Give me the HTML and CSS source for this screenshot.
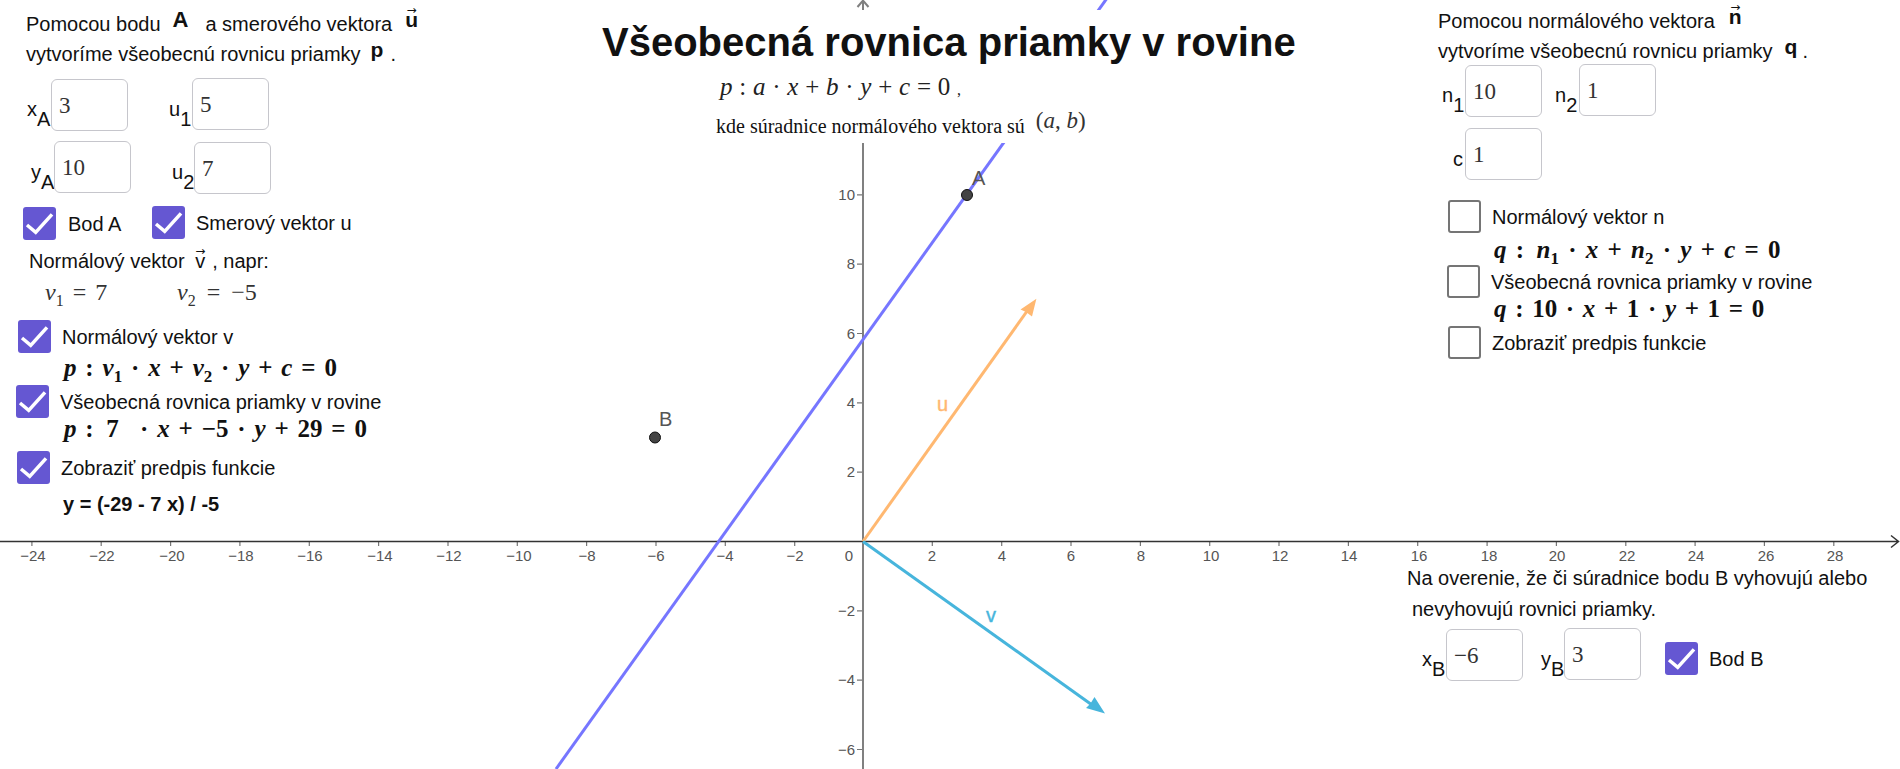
FILE: index.html
```html
<!DOCTYPE html>
<html lang="sk">
<head>
  <meta charset="UTF-8" />
  <meta name="viewport" content="width=device-width, initial-scale=1.0"/>
  <title>Všeobecná rovnica priamky v rovine</title>
  <link rel="stylesheet" href="styles.css">
</head>
<body>
<div class="stage">

  <!-- graphics view, origin at 863,541.5 and 34.67px per unit -->
  <svg class="plot" width="1900" height="769" viewBox="0 0 1900 769">
    <path class="grid-tick" d="M31.9 541v5M101.2 541v5M170.6 541v5M239.9 541v5M309.3 541v5M378.6 541v5M448 541v5M517.3 541v5M586.6 541v5M656 541v5M725.3 541v5M794.7 541v5M932.3 541v5M1001.7 541v5M1071 541v5M1140.4 541v5M1209.7 541v5M1279 541v5M1348.4 541v5M1417.7 541v5M1487.1 541v5M1556.4 541v5M1625.8 541v5M1695.1 541v5M1764.4 541v5M1833.8 541v5"/>
    <path class="grid-tick" d="M857 194.8h6M857 264.1h6M857 333.5h6M857 402.8h6M857 472.2h6M857 610.8h6M857 680.2h6M857 749.5h6"/>
    <path class="axis-y" d="M863 769V0M857.5 7L863 .5 868.5 7"/>
    <path class="axis-x" d="M0 541.5H1899M1891 535.5l7.5 6-7.5 6"/>

    <line class="line-p" x1="556" y1="769" x2="1110" y2="-6"/>
    <line class="vec-u" x1="863" y1="541.5" x2="1030" y2="307"/>
    <path class="head-u" d="M1036.4 298.8L1020.5 309.5 1026 312 1032 316.5z"/>
    <line class="vec-v" x1="863" y1="541.5" x2="1097" y2="708.5"/>
    <path class="head-v" d="M1105 713.5L1086 708 1090.5 703.5 1094.5 697z"/>

    <text class="lbl-u" x="937" y="411">u</text>
    <text class="lbl-v" x="986" y="622">v</text>

    <circle class="pt" cx="967" cy="195" r="5.5"/>
    <circle class="pt" cx="655" cy="437.5" r="5.5"/>
    <text class="lbl-pt" x="972" y="185">A</text>
    <text class="lbl-pt" x="659" y="426">B</text>

    <g class="ticks-x">
      <text x="33" y="561">−24</text><text x="102" y="561">−22</text><text x="172" y="561">−20</text>
      <text x="241" y="561">−18</text><text x="310" y="561">−16</text><text x="380" y="561">−14</text>
      <text x="449" y="561">−12</text><text x="519" y="561">−10</text><text x="587" y="561">−8</text>
      <text x="656" y="561">−6</text><text x="725" y="561">−4</text><text x="795" y="561">−2</text>
      <text x="849" y="561">0</text>
      <text x="932" y="561">2</text><text x="1002" y="561">4</text><text x="1071" y="561">6</text>
      <text x="1141" y="561">8</text><text x="1211" y="561">10</text><text x="1280" y="561">12</text>
      <text x="1349" y="561">14</text><text x="1419" y="561">16</text><text x="1489" y="561">18</text>
      <text x="1557" y="561">20</text><text x="1627" y="561">22</text><text x="1696" y="561">24</text>
      <text x="1766" y="561">26</text><text x="1835" y="561">28</text>
    </g>
    <g class="ticks-y">
      <text x="855" y="199.5">10</text><text x="855" y="269">8</text><text x="855" y="338.5">6</text>
      <text x="855" y="408">4</text><text x="855" y="477">2</text><text x="855" y="615.5">−2</text>
      <text x="855" y="685">−4</text><text x="855" y="754.5">−6</text>
    </g>
  </svg>

  <!-- left column -->
  <section class="panel panel-left">
    <p class="note">Pomocou bodu<b class="sym sym-a">A</b>a smerového vektora<b class="sym vec sym-u">u</b></p>
    <p class="note">vytvoríme všeobecnú rovnicu priamky<b class="sym sym-p">p</b>.</p>

    <div class="row row-xa">
      <div class="lab lab-xa">x<sub>A</sub></div>
      <div class="box box-low">3</div>
      <div class="lab lab-u1">u<sub>1</sub></div>
      <div class="box">5</div>
    </div>
    <div class="row row-ya">
      <div class="lab lab-ya">y<sub>A</sub></div>
      <div class="box">10</div>
      <div class="lab lab-u2">u<sub>2</sub></div>
      <div class="box box-low">7</div>
    </div>

    <div class="checks-a">
      <label class="cb cb-a"><span class="tick on"><svg viewBox="0 0 33 33"><path d="M4 18l8.7 7.3L29 7.3"/></svg></span><span class="txt">Bod A</span></label>
      <label class="cb cb-u"><span class="tick on"><svg viewBox="0 0 33 33"><path d="M4 18l8.7 7.3L29 7.3"/></svg></span><span class="txt">Smerový vektor u</span></label>
    </div>

    <p class="note note-v">Normálový vektor <i class="sym-thin vec">v</i>, napr:</p>
    <div class="values"><span class="val-1"><i>v</i><sub>1</sub> = 7</span><span class="val-2"><i>v</i><sub>2</sub> = −5</span></div>

    <label class="cb cb-nv"><span class="tick on"><svg viewBox="0 0 33 33"><path d="M4 18l8.7 7.3L29 7.3"/></svg></span><span class="txt">Normálový vektor v</span></label>
    <div class="eq eq-1"><i>p</i> : <i>v</i><sub>1</sub> · <i>x</i> + <i>v</i><sub>2</sub> · <i>y</i> + <i>c</i> = 0</div>
    <label class="cb cb-gen"><span class="tick on"><svg viewBox="0 0 33 33"><path d="M4 18l8.7 7.3L29 7.3"/></svg></span><span class="txt">Všeobecná rovnica priamky v rovine</span></label>
    <div class="eq eq-2"><i>p</i> :&ensp;7&ensp;&nbsp;· <i>x</i> + −5 · <i>y</i> + 29 = 0</div>
    <label class="cb cb-fn"><span class="tick on"><svg viewBox="0 0 33 33"><path d="M4 18l8.7 7.3L29 7.3"/></svg></span><span class="txt">Zobraziť predpis funkcie</span></label>
    <div class="fn">y = (-29 - 7 x) / -5</div>
  </section>

  <!-- heading over the plot -->
  <header class="head">
    <h1>Všeobecná rovnica priamky v rovine</h1>
    <div class="formula"><i>p</i> : <i>a</i> · <i>x</i> + <i>b</i> · <i>y</i> + <i>c</i> = 0 <span class="comma">,</span></div>
    <div class="where">kde súradnice normálového vektora sú <span class="pair">(<i>a</i>, <i>b</i>)</span></div>
  </header>

  <!-- right column -->
  <section class="panel panel-right">
    <p class="note">Pomocou normálového vektora<b class="sym vec sym-n">n</b></p>
    <p class="note">vytvoríme všeobecnú rovnicu priamky<b class="sym sym-q">q</b>.</p>

    <div class="row row-n">
      <div class="lab lab-n1">n<sub>1</sub></div>
      <div class="box box-low">10</div>
      <div class="lab lab-n2">n<sub>2</sub></div>
      <div class="box">1</div>
    </div>
    <div class="row row-c">
      <div class="lab lab-c">c</div>
      <div class="box">1</div>
    </div>

    <label class="cb cb-r1"><span class="tick"></span><span class="txt">Normálový vektor n</span></label>
    <div class="eq eq-3"><i>q</i> :&ensp;<i>n</i><sub>1</sub> · <i>x</i> + <i>n</i><sub>2</sub> · <i>y</i> + <i>c</i> = 0</div>
    <label class="cb cb-r2"><span class="tick"></span><span class="txt">Všeobecná rovnica priamky v rovine</span></label>
    <div class="eq eq-4"><i>q</i> : 10 · <i>x</i> + 1 · <i>y</i> + 1 = 0</div>
    <label class="cb cb-r3"><span class="tick"></span><span class="txt">Zobraziť predpis funkcie</span></label>
  </section>

  <!-- point B check, bottom right -->
  <section class="panel panel-check">
    <p class="note">Na overenie, že či súradnice bodu B vyhovujú alebo</p>
    <p class="note note-in">nevyhovujú rovnici priamky.</p>
    <div class="row row-b">
      <div class="lab lab-xb">x<sub>B</sub></div>
      <div class="box box-low">−6</div>
      <div class="lab lab-yb">y<sub>B</sub></div>
      <div class="box">3</div>
      <label class="cb cb-b"><span class="tick on"><svg viewBox="0 0 33 33"><path d="M4 18l8.7 7.3L29 7.3"/></svg></span><span class="txt">Bod B</span></label>
    </div>
  </section>

</div>
</body>
</html>
```

FILE: styles.css
```css
body {
  margin: 0;
  background-color: white;
  font-family: "Liberation Sans", Arial, sans-serif;
  font-size: 20px;
  color: #111;
  overflow: hidden;
}

.stage {
  position: relative;
  width: 1900px;
  height: 769px;
  overflow: hidden;
}

/* plot */
.plot {
  position: absolute;
  left: 0;
  top: 0;
}

.axis-x {
  fill: none;
  stroke: #333;
  stroke-width: 1.5;
}

.axis-y {
  fill: none;
  stroke: #808080;
  stroke-width: 2;
}

.grid-tick {
  fill: none;
  stroke: #777;
  stroke-width: 1.2;
}

.line-p {
  stroke: #7676ff;
  stroke-width: 3;
}

.vec-u {
  stroke: #ffb871;
  stroke-width: 3;
}

.head-u {
  fill: #ffb871;
}

.vec-v {
  stroke: #47b5dc;
  stroke-width: 3;
}

.head-v {
  fill: #47b5dc;
}

.pt {
  fill: #444;
  stroke: #111;
  stroke-width: 1;
}

.lbl-pt {
  font-size: 20px;
  fill: #555;
}

.lbl-u {
  font-size: 20px;
  fill: #ffb871;
  stroke: #ffb871;
  stroke-width: 0.4;
}

.lbl-v {
  font-size: 20px;
  fill: #47b5dc;
  stroke: #47b5dc;
  stroke-width: 0.4;
}

.ticks-x text,
.ticks-y text {
  font-size: 15px;
  fill: #555;
}

.ticks-x text {
  text-anchor: middle;
}

.ticks-y text {
  text-anchor: end;
}

/* widgets */
.panel {
  position: absolute;
}

.panel-left {
  left: 0;
  top: 9px;
  width: 500px;
}

.panel-right {
  left: 1420px;
  top: 6px;
  width: 480px;
}

.panel-check {
  left: 1380px;
  top: 563px;
  width: 520px;
}

.note {
  margin: 0;
  line-height: 30px;
  white-space: nowrap;
}

.panel-left .note {
  padding-left: 26px;
}

.panel-right .note {
  padding-left: 18px;
}

.panel-check .note {
  padding-left: 27px;
  line-height: 30.5px;
}

.panel-check .note-in {
  padding-left: 32px;
}

.sym {
  position: relative;
  top: -4px;
  font-weight: bold;
  font-size: 21px;
}

.sym-a {
  font-size: 22px;
  margin: 0 17px 0 12px;
}

.sym-u {
  margin-left: 13px;
}

.sym-p {
  margin: 0 7px 0 10px;
}

.sym-n {
  margin-left: 14px;
}

.sym-q {
  margin: 0 5px 0 12px;
}

.vec {
  position: relative;
  display: inline-block;
}

.vec::before {
  content: "→";
  position: absolute;
  left: 0;
  top: -10px;
  width: 100%;
  text-align: center;
  font-size: 12px;
  font-weight: normal;
  font-family: "DejaVu Sans", sans-serif;
}

.sym-thin {
  font-style: normal;
  margin: 0 7px 0 5px;
}

.row {
  display: flex;
  align-items: flex-start;
}

.box {
  box-sizing: border-box;
  width: 77px;
  height: 52px;
  flex: none;
  display: flex;
  align-items: center;
  padding-left: 7px;
  padding-top: 1px;
  background-color: white;
  border: 1.5px solid #c6c6cc;
  border-radius: 6px;
  font-family: "Liberation Serif", serif;
  font-size: 23px;
  color: #333;
}

.box-low {
  margin-top: 1px;
}

.lab {
  flex: none;
  font-size: 20px;
  line-height: 24px;
  margin-top: 19px;
}

.lab sub {
  font-size: 20px;
  line-height: 0;
  vertical-align: -10px;
}

.row-xa {
  margin-top: 9px;
  padding-left: 27px;
}

.lab-xa {
  width: 24px;
}

.lab-u1 {
  width: 23px;
  margin-left: 41px;
}

.row-ya {
  margin-top: 10px;
  padding-left: 31px;
}

.lab-ya {
  width: 23px;
}

.lab-u2 {
  width: 22px;
  margin-left: 41px;
}

.cb {
  display: flex;
  align-items: center;
  gap: 11px;
  height: 33px;
  white-space: nowrap;
}

.txt {
  padding-top: 2px;
}

.tick {
  box-sizing: border-box;
  display: block;
  width: 33px;
  height: 33px;
  flex: none;
  border: 2.5px solid #757575;
  border-radius: 3px;
  background-color: white;
}

.tick.on {
  border: none;
  background-color: #6557d2;
}

.tick svg {
  display: block;
  width: 33px;
  height: 33px;
}

.tick path {
  fill: none;
  stroke: white;
  stroke-width: 3.5;
}

.checks-a {
  display: flex;
  margin-top: 12px;
  padding-left: 23px;
}

.cb-a {
  width: 129px;
  margin-top: 1px;
  gap: 12px;
}

.note-v {
  margin-top: 6px;
}

.panel-left .note-v {
  padding-left: 29px;
}

.values {
  display: flex;
  margin-top: 1px;
  padding-left: 45px;
  line-height: 30px;
  font-family: "Liberation Serif", serif;
  font-size: 24px;
  word-spacing: 3px;
  color: #333;
}

.values sub {
  font-size: 16px;
  line-height: 0;
}

.val-1 {
  width: 132px;
}

.val-2 {
  word-spacing: 5px;
}

.cb-nv {
  margin-top: 13px;
  margin-left: 18px;
}

.eq {
  font-family: "Liberation Serif", serif;
  font-size: 25px;
  font-weight: bold;
  line-height: 24px;
  white-space: nowrap;
  word-spacing: 2.6px;
}

.eq sub {
  font-size: 17px;
  line-height: 0;
}

.eq-1 {
  margin-top: 3px;
  margin-left: 64px;
}

.cb-gen {
  margin-top: 5px;
  margin-left: 16px;
}

.eq-2 {
  margin-top: -1px;
  margin-left: 64px;
}

.cb-fn {
  margin-top: 10px;
  margin-left: 17px;
}

.fn {
  margin-top: 8px;
  margin-left: 63px;
  font-weight: bold;
  line-height: 24px;
}

/* heading block hides the plot behind it */
.head {
  position: absolute;
  left: 600px;
  top: 10px;
  width: 700px;
  height: 133px;
  background-color: white;
}

h1 {
  margin: 0;
  padding-left: 2px;
  padding-top: 5px;
  font-size: 40px;
  line-height: 54px;
  white-space: nowrap;
}

.formula {
  margin-top: 4px;
  padding-left: 120px;
  font-family: "Liberation Serif", serif;
  font-size: 25px;
  line-height: 28px;
  word-spacing: 0.5px;
  color: #222;
}

.comma {
  font-size: 16px;
}

.where {
  margin-top: 8px;
  padding-left: 116px;
  font-family: "Liberation Serif", serif;
  font-size: 20px;
  line-height: 28px;
}

.pair {
  position: relative;
  top: -5px;
  margin-left: 6px;
  font-size: 23px;
  color: #333;
}

/* right column */
.row-n {
  margin-top: -2px;
  padding-left: 22px;
}

.lab-n1 {
  width: 23px;
}

.lab-n2 {
  width: 24px;
  margin-left: 13px;
}

.row-c {
  margin-top: 11px;
  padding-left: 33px;
}

.lab-c {
  width: 12px;
}

.cb-r1 {
  margin-top: 20px;
  margin-left: 28px;
}

.eq-3 {
  margin-top: 5px;
  margin-left: 74px;
  word-spacing: 3px;
}

.cb-r2 {
  margin-top: 3px;
  margin-left: 27px;
}

.eq-4 {
  margin-top: -1px;
  margin-left: 74px;
  word-spacing: 2.4px;
}

.cb-r3 {
  margin-top: 5px;
  margin-left: 28px;
}

/* point B */
.row-b {
  margin-top: 4px;
  padding-left: 42px;
}

.lab-xb {
  width: 24px;
}

.lab-yb {
  width: 23px;
  margin-left: 18px;
}

.cb-b {
  margin-top: 14px;
  margin-left: 24px;
}
```
